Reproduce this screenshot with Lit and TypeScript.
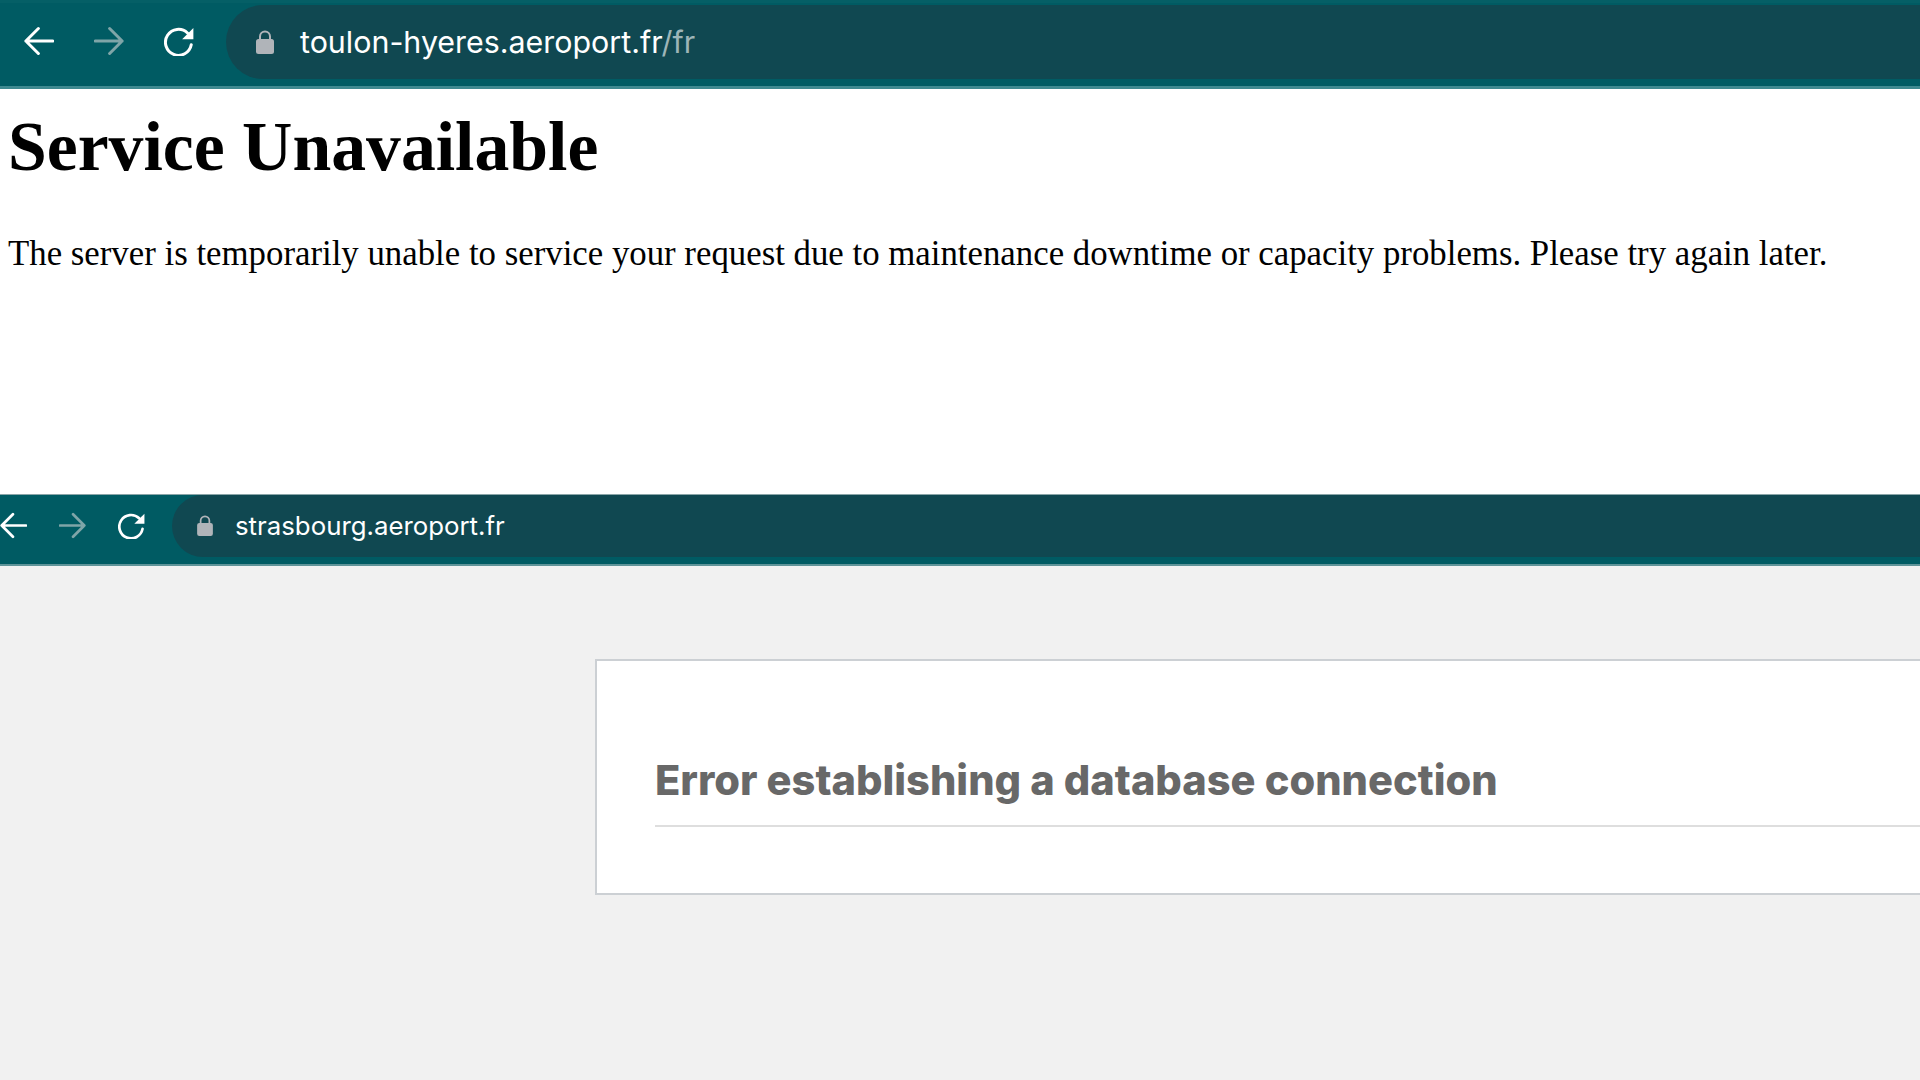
import { LitElement, html, css } from "lit";
import { customElement, property } from "lit/decorators.js";

@customElement("browser-bar")
class BrowserBar extends LitElement {
  @property() host = "";
  @property() path = "";
  @property({ type: Boolean }) compact = false;

  static styles = css`
    :host { display: block; }
    .bar {
      display: flex; align-items: flex-start; background: #005b63;
      box-sizing: border-box; overflow: hidden;
    }
    .large { height: 89px; border-top: 3px solid #055f66; border-bottom: 3px solid #3e8990; padding-top: 2px; }
    .small { height: 72px; border-top: 1px solid #8aa5a8; border-bottom: 2px solid #5f9499; }
    .nav { display: flex; align-items: center; flex: none; box-sizing: border-box; }
    .large .nav { width: 226px; height: 72px; padding-left: 24px; gap: 40px; }
    .small .nav { width: 172px; height: 61px; gap: 32px; }
    svg { display: block; flex: none; fill: none; stroke: #fff; stroke-linecap: round; stroke-linejoin: round; }
    .large svg.ic { width: 30px; height: 30px; stroke-width: 2.4; }
    .small svg.ic { width: 27px; height: 27px; stroke-width: 2.4; }
    svg.dim { stroke: #7fa5a8; }
    .pill {
      flex: 1; display: flex; align-items: center; background: #104851; box-sizing: border-box;
      color: #fff; font-family: Inter, "Liberation Sans", sans-serif; white-space: nowrap;
    }
    .large .pill { height: 74px; border-radius: 37px 0 0 37px; padding-left: 30px; font-size: 30.4px; gap: 26px; }
    .small .pill { height: 62px; border-radius: 31px 0 0 31px; padding: 0 0 2px 25px; font-size: 25.8px; gap: 22px; }
    svg.lock { fill: #b0b4b9; stroke: none; }
    .large svg.lock { width: 18px; height: 24px; }
    .small svg.lock { width: 16px; height: 21px; }
    .path { color: #9db5b8; }
  `;

  render() {
    return html`
      <div class="bar ${this.compact ? "small" : "large"}">
        <div class="nav">
          <svg class="ic" viewBox="0 0 24 24"><path d="M23 12H1.500M11.500 2 1.500 12l10 10"/></svg>
          <svg class="ic dim" viewBox="0 0 24 24"><path d="M1 12h21.500M12.500 2l10 10-10 10"/></svg>
          <svg class="ic" viewBox="0 0 24 24">
            <path d="M21.800 15A10.400 10.400 0 1 1 18.800 5.600"/>
            <path d="M23.500 1.500V10.500H14.500Z" fill="#fff" stroke="none"/>
          </svg>
        </div>
        <div class="pill">
          <svg class="lock" viewBox="0 0 18 24">
            <path d="M4 10V6.500a5 5 0 0 1 10 0V10" fill="none" stroke="#b0b4b9" stroke-width="2"/>
            <rect x="0" y="9" width="18" height="15" rx="2.500"/>
          </svg>
          <span>${this.host}<span class="path">${this.path}</span></span>
        </div>
      </div>
    `;
  }
}

@customElement("app-root")
class AppRoot extends LitElement {
  static styles = css`
    :host { display: block; width: 1920px; height: 1080px; overflow: hidden; background: #fff; }
    .page503 { height: 405px; box-sizing: border-box; padding: 21px 8px 0; font-family: "Liberation Serif", "Times New Roman", serif; color: #000; }
    h1 { margin: 0; font-size: 69.7px; line-height: 74px; font-weight: 700; white-space: nowrap; }
    p { margin: 50px 0 0; font-size: 34.8px; line-height: 39px; white-space: nowrap; }
    .dberror { height: 514px; background: #f1f1f1; padding: 93px 0 0 595px; box-sizing: border-box; overflow: hidden; }
    .card {
      width: 1400px; height: 236px; box-sizing: border-box; background: #fff;
      border: 2px solid #ccd0d4; padding: 0 58px;
    }
    h2 {
      margin: 0; padding: 95px 0 21px; border-bottom: 2px solid #dedede;
      font-family: Inter, "Liberation Sans", sans-serif; font-size: 41.6px; line-height: 48px;
      font-weight: 800; color: #686868; white-space: nowrap;
    }
  `;

  render() {
    return html`
      <browser-bar host="toulon-hyeres.aeroport.fr" path="/fr"></browser-bar>
      <section class="page503">
        <h1>Service Unavailable</h1>
        <p>The server is temporarily unable to service your request due to maintenance downtime or capacity problems. Please try again later.</p>
      </section>
      <browser-bar compact host="strasbourg.aeroport.fr"></browser-bar>
      <section class="dberror">
        <div class="card"><h2>Error establishing a database connection</h2></div>
      </section>
    `;
  }
}
